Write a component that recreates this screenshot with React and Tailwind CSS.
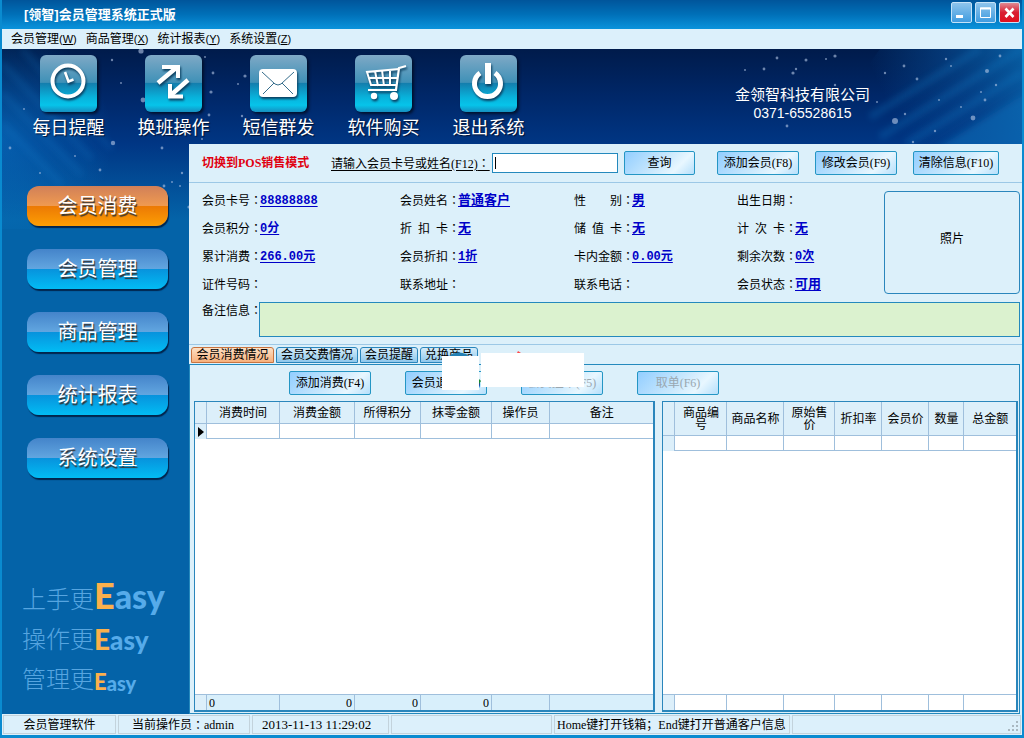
import clsx from 'clsx';

const MENUS = [
  { label: '会员管理', hotkey: 'W' },
  { label: '商品管理', hotkey: 'X' },
  { label: '统计报表', hotkey: 'Y' },
  { label: '系统设置', hotkey: 'Z' },
];

const SIDE_ITEMS = ['会员消费', '会员管理', '商品管理', '统计报表', '系统设置'];

const MEMBER_FIELDS = [
  { label: '会员卡号', value: '88888888' },
  { label: '会员姓名', value: '普通客户', wide: true },
  { label: '性　　别', value: '男', wide: true },
  { label: '出生日期' },
  { label: '会员积分', value: '0分' },
  { label: '折 扣 卡', value: '无', wide: true },
  { label: '储 值 卡', value: '无', wide: true },
  { label: '计 次 卡', value: '无', wide: true },
  { label: '累计消费', value: '266.00元' },
  { label: '会员折扣', value: '1折' },
  { label: '卡内金额', value: '0.00元' },
  { label: '剩余次数', value: '0次' },
  { label: '证件号码' },
  { label: '联系地址' },
  { label: '联系电话' },
  { label: '会员状态', value: '可用', wide: true },
];

const TABS = [
  { label: '会员消费情况', width: 'w-[83px]' },
  { label: '会员交费情况', width: 'w-[82px]' },
  { label: '会员提醒', width: 'w-[58px]' },
  { label: '兑换商品', width: 'w-[58px]' },
];

const SPEND_COLUMNS = [
  { label: '消费时间', width: 'w-[73px]', total: '0', align: 'text-left' },
  { label: '消费金额', width: 'w-[75px]', total: '0', align: 'text-right' },
  { label: '所得积分', width: 'w-[66px]', total: '0', align: 'text-right' },
  { label: '抹零金额', width: 'w-[71px]', total: '0', align: 'text-right' },
  { label: '操作员', width: 'w-[58px]' },
  { label: '备注', width: 'w-auto' },
];

const GOODS_COLUMNS = [
  { label: '商品编号', width: 'w-[52px]' },
  { label: '商品名称', width: 'w-[57px]' },
  { label: '原始售价', width: 'w-[51px]' },
  { label: '折扣率', width: 'w-[47px]' },
  { label: '会员价', width: 'w-[47px]' },
  { label: '数量', width: 'w-[35px]' },
  { label: '总金额', width: 'w-auto' },
];

const LEFT_STARS = [
  [141, 51, 2.4], [110, 11, 1.2], [167, 17, 1], [119, 34, 1], [203, 8, 1], [211, 24, 1.4], [209, 43, 1.6], [243, 27, 1.6],
  [236, 35, 1], [207, 66, 1.4], [240, 67, 1.2], [139, 2, 2.6], [200, 90, 1], [111, 94, 2.2], [8, 99, 1.4], [73, 107, 1],
  [98, 121, 1.4], [38, 124, 1], [178, 137, 1], [162, 137, 1.4], [170, 133, 1], [180, 124, 1.2], [187, 158, 1.6], [160, 99, 1.4], [22, 60, 1],
];

const RIGHT_STARS = [
  [97, 9, 1.4], [126, 11, 1.5], [146, 10, 1], [155, 7, 1.6], [84, 20, 1.4], [65, 21, 1], [116, 20, 1.2], [113, 24, 1.6],
  [155, 36, 1.2], [205, 24, 1.2], [224, 17, 1.4], [237, 30, 1.4], [266, 10, 1.2], [271, 17, 1], [307, 22, 2], [316, 36, 1.2],
  [320, 7, 1.4], [301, 43, 1], [305, 51, 1.4], [259, 51, 1], [281, 58, 1], [197, 53, 1], [215, 72, 3], [225, 65, 1.2],
  [293, 69, 2.4], [255, 82, 1.2], [107, 77, 1.4], [233, 93, 1.2],
];

function Sky() {
  return (
    <div aria-hidden="true" className="absolute inset-0 flex items-start justify-between overflow-hidden bg-[linear-gradient(#001b4b_0px,#00286a_50px,#003684_95px,#0463a8_170px,#0463a8_100%)]">
      <svg width="280" height="180" className="shrink-0">
        <defs>
          <radialGradient id="glowLeft" cx="0" cy="90" r="110" gradientUnits="userSpaceOnUse">
            <stop offset="0" stopColor="#0a7fd0" stopOpacity="0.55" />
            <stop offset="1" stopColor="#0a7fd0" stopOpacity="0" />
          </radialGradient>
          <filter id="soft" x="-20%" y="-20%" width="140%" height="140%">
            <feGaussianBlur stdDeviation="3" />
          </filter>
          <filter id="haze" x="-1" y="-1" width="3" height="3">
            <feGaussianBlur stdDeviation="0.6" />
          </filter>
        </defs>
        <rect width="120" height="180" fill="url(#glowLeft)" />
        <path d="M0 14L90 110M0 44L80 126M0 74L60 136M20 0L110 100" stroke="#1d8fdc" strokeWidth="6" opacity="0.16" filter="url(#soft)" />
        {LEFT_STARS.map(([x, y, r]) => (
          <circle key={`${x}-${y}`} cx={x} cy={y} r={r} fill="#b4c6e6" opacity="0.6" filter="url(#haze)" />
        ))}
      </svg>
      <svg width="342" height="95" className="shrink-0">
        <defs>
          <linearGradient id="glowRight" x1="342" y1="0" x2="210" y2="60" gradientUnits="userSpaceOnUse">
            <stop offset="0" stopColor="#0b72bd" />
            <stop offset="0.5" stopColor="#0a5aa8" stopOpacity="0.6" />
            <stop offset="1" stopColor="#0a5aa8" stopOpacity="0" />
          </linearGradient>
        </defs>
        <path d="M200 0H342V95H130Z" fill="url(#glowRight)" opacity="0.75" />
        <path d="M300 0L190 68M342 0L200 88M342 24L226 95" stroke="#1583cc" strokeWidth="7" opacity="0.25" filter="url(#soft)" />
        <path d="M350 42L256 100H350Z" fill="#0d70ba" opacity="0.5" filter="url(#soft)" />
        {RIGHT_STARS.map(([x, y, r]) => (
          <circle key={`${x}-${y}`} cx={x} cy={y} r={r} fill="#b6c8e6" opacity="0.6" filter="url(#haze)" />
        ))}
      </svg>
    </div>
  );
}

function ClockIcon() {
  return (
    <g fill="none" stroke="#fff">
      <circle cx="28" cy="26" r="15.5" strokeWidth="4" />
      <path d="M25 17L28.5 26.5L33.5 24.5" strokeWidth="2.6" />
    </g>
  );
}

function SwapIcon() {
  return (
    <g fill="none" stroke="#fff" strokeWidth="4.5">
      <path d="M13 28L31 13" />
      <path d="M17 12H33V23" strokeWidth="4" />
      <path d="M43 25L26 40" />
      <path d="M25 29V41.5H38" strokeWidth="4" />
    </g>
  );
}

function MailIcon() {
  return (
    <g>
      <rect x="9" y="14" width="38" height="28" rx="4" fill="#fff" />
      <path d="M12 17L25 29Q28 31 31 29L44 17M13 39L24 28M43 39L32 28" fill="none" stroke="#356d8c" strokeWidth="1" />
    </g>
  );
}

function CartIcon() {
  return (
    <g fill="none" stroke="#fff">
      <path d="M51 11L44 13L41 35H13" strokeWidth="2.2" />
      <path d="M44 14L12 17L16 30L41 30M13 23L42 23M20 16L23 31M27 15L29 31M35 14L35 31" strokeWidth="2" />
      <circle cx="19" cy="41" r="3.2" fill="#fff" stroke="none" />
      <circle cx="39" cy="41" r="4" fill="#fff" stroke="none" />
    </g>
  );
}

function PowerIcon() {
  return (
    <g fill="none" stroke="#fff">
      <path d="M20 18A13 13 0 1 0 35 18" strokeWidth="5" />
      <path d="M28 8V29" strokeWidth="6" strokeLinecap="butt" />
    </g>
  );
}

const TOOLS = [
  { label: '每日提醒', Icon: ClockIcon },
  { label: '换班操作', Icon: SwapIcon },
  { label: '短信群发', Icon: MailIcon },
  { label: '软件购买', Icon: CartIcon },
  { label: '退出系统', Icon: PowerIcon },
];

function ToolButton({ label, Icon }) {
  return (
    <button type="button" className="flex w-[105px] flex-col items-center text-white">
      <span className="block size-[57px] rounded-md bg-[linear-gradient(#7fa9c6_0%,#3f91b7_48%,#137fae_50%,#08b3dc_75%,#06c4ea_88%,#168fc0_100%)] shadow-[2px_2px_3px_#00112e]">
        <svg width="57" height="57" viewBox="0 0 57 57" className="drop-shadow-[1px_2px_1px_#0b3f60]">
          <Icon />
        </svg>
      </span>
      <span className="mt-[5px] text-lg leading-[22px] [text-shadow:1px_1px_1px_#001030]">{label}</span>
    </button>
  );
}

function TitleBar() {
  const box = 'flex size-[21px] items-center justify-center rounded-[2px] border border-[#c4e2f8]';
  return (
    <header className="flex h-[29px] items-start justify-between bg-[linear-gradient(#00559b,#0070b8_50%,#0a93dc)] pr-[2px] pl-[22px]">
      <h1 className="font-['Liberation_Sans','Noto_Sans_CJK_SC',sans-serif] text-[13px] leading-[29px] font-bold text-white">[领智]会员管理系统正式版</h1>
      <div className="flex gap-[3px] pt-[2px]">
        <button type="button" aria-label="最小化" className={clsx(box, 'bg-[linear-gradient(#8ec4ec,#3f9ce0)]')}>
          <svg width="19" height="19"><rect x="4" y="12" width="7" height="3" fill="#fff" /></svg>
        </button>
        <button type="button" aria-label="最大化" className={clsx(box, 'bg-[linear-gradient(#8ec4ec,#3f9ce0)]')}>
          <svg width="19" height="19"><path d="M4.5 5H14.5V14.5H4.5Z" fill="none" stroke="#fff" /><path d="M4 5.5H15" stroke="#fff" strokeWidth="2" /></svg>
        </button>
        <button type="button" aria-label="关闭" className={clsx(box, 'bg-[linear-gradient(#e08a92,#d81f33_50%,#e0101f)]')}>
          <svg width="19" height="19"><path d="M5.5 5.5L13.5 14M13.5 5.5L5.5 14" stroke="#fff" strokeWidth="2.6" /></svg>
        </button>
      </div>
    </header>
  );
}

function MenuBar() {
  return (
    <nav className="flex h-5 items-center gap-[9px] bg-[#dcf0fb] pl-[9px] font-['Liberation_Sans','Noto_Sans_CJK_SC',sans-serif]">
      {MENUS.map((m) => (
        <button key={m.label} type="button" className="leading-5">
          {m.label}<span className="text-[11px]">(<u>{m.hotkey}</u>)</span>
        </button>
      ))}
    </nav>
  );
}

function Slogan({ text, size, lead }) {
  return (
    <p className="flex h-10 items-end font-['Lato','Noto_Sans_CJK_SC',sans-serif] leading-none">
      <span className="pb-[2px] text-2xl leading-none font-light text-[#56a5e0]">{text}</span>
      <span className={clsx('font-black text-[#fbb04c]', lead)}>E</span>
      <span className={clsx('font-black text-[#56abea]', size)}>asy</span>
    </p>
  );
}

function Sidebar() {
  return (
    <aside className="flex w-[187px] shrink-0 flex-col justify-between pt-[42px] pb-[21px]">
      <nav className="flex flex-col gap-[23px] pl-[25px]">
        {SIDE_ITEMS.map((label, i) => (
          <button
            key={label}
            type="button"
            className={clsx(
              'h-10 w-[141px] rounded-xl text-xl leading-10 text-white shadow-[1px_2px_1px_#02254d] [text-shadow:1px_2px_1px_#333]',
              i === 0
                ? 'bg-[linear-gradient(#d08058_0%,#f09a50_50%,#ec7a04_51%,#fd9e04_100%)]'
                : 'bg-[linear-gradient(#4484ca_0%,#62a6e0_50%,#0793dd_51%,#02bcf4_100%)]',
            )}
          >
            {label}
          </button>
        ))}
      </nav>
      <div className="pl-5">
        <Slogan text="上手更" lead="text-[36px]" size="text-[34px]" />
        <Slogan text="操作更" lead="text-[28px]" size="text-[26px]" />
        <Slogan text="管理更" lead="text-[22px]" size="text-[20px]" />
      </div>
    </aside>
  );
}

function PushButton({ children, className, disabled }) {
  return (
    <button
      type="button"
      disabled={disabled}
      className={clsx(
        'h-6 shrink-0 rounded-[2px] border border-[#2496c4] bg-[linear-gradient(135deg,#92ceff_0%,#c9e8fd_50%,#e8f7ff_75%,#b5dffb_100%)] whitespace-nowrap leading-[20px] disabled:text-[#9aa7b0]',
        className,
      )}
    >
      {children}
    </button>
  );
}

function Colon() {
  return <span className="font-['Noto_Sans_CJK_TC',sans-serif]">：</span>;
}

function SearchRow() {
  return (
    <form className="flex h-[39px] items-center border-b border-[#9cc8e6] pl-[13px]">
      <a href="#pos" className="w-[129px] font-bold whitespace-nowrap text-[#e00010]">切换到POS销售模式</a>
      <label htmlFor="card" className="w-[161px] whitespace-nowrap underline underline-offset-2">请输入会员卡号或姓名(F12)<Colon /></label>
      <div className="relative">
        <input id="card" type="text" className="block h-5 w-[126px] rounded-none border border-[#2489bd] bg-white px-[2px] outline-none" />
        {/* text caret */}
        <span className="absolute top-1 left-[3px] h-3 w-px bg-black" />
      </div>
      <PushButton className="ml-[6px] w-[71px]">查询</PushButton>
      <div className="ml-[22px] flex gap-4">
        <PushButton className="w-[82px]">添加会员(F8)</PushButton>
        <PushButton className="w-[82px]">修改会员(F9)</PushButton>
        <PushButton className="w-[86px]">清除信息(F10)</PushButton>
      </div>
    </form>
  );
}

function MemberInfo() {
  return (
    <section className="border-b border-[#9cc8e6] pt-[3px] pr-[2px] pb-[7px] pl-[13px]">
      <div className="flex items-start justify-between">
        <dl className="grid flex-1 grid-cols-[198px_174px_163px_1fr] leading-7">
          {MEMBER_FIELDS.map((f) => (
            <div key={f.label} className="flex h-7 whitespace-pre">
              <dt className="w-[58px] whitespace-pre">
                <span className="inline-flex w-12 justify-between">
                  {f.label.split(/[ 　]+/).map((part) => <span key={part}>{part}</span>)}
                </span>
                <Colon />
              </dt>
              {f.value && (
                <dd>
                  <a
                    href="#member"
                    className={clsx(
                      "font-['Liberation_Mono','Noto_Sans_CJK_SC',monospace] font-bold text-[#0000c8] underline underline-offset-2",
                      f.wide && 'text-[13px]',
                    )}
                  >
                    {f.value}
                  </a>
                </dd>
              )}
            </div>
          ))}
        </dl>
        <div className="mt-[5px] flex h-[103px] w-[136px] shrink-0 items-center justify-center rounded-[4px] border border-[#2a86bc] pb-2">照片</div>
      </div>
      <div className="mt-1 flex">
        <label htmlFor="memo" className="w-[57px] shrink-0 whitespace-nowrap leading-4">备注信息<Colon /></label>
        <textarea id="memo" className="h-[35px] flex-1 resize-none border border-[#2489bd] bg-[#dbf2cf] outline-none" />
      </div>
    </section>
  );
}

function ColumnWidths({ columns }) {
  return (
    <colgroup>
      <col className="w-3" />
      {columns.map((c) => <col key={c.label} className={c.width} />)}
    </colgroup>
  );
}

function DataGrid({ name, columns, headHeight, marker, footTint }) {
  const line = 'border-r border-[#9fbfdc] last:border-r-0';
  return (
    <div className="flex flex-col border border-r-2 border-b-2 border-[#2a86bc] bg-white">
      <table aria-label={name} className="w-full table-fixed border-separate border-spacing-0">
        <ColumnWidths columns={columns} />
        <thead>
          <tr className={clsx('bg-[#dceffa]', headHeight)}>
            <td className={clsx('border-b', line)} />
            {columns.map((c) => (
              <th key={c.label} scope="col" className={clsx('border-b px-[3px] leading-3 font-normal', line)}>{c.label}</th>
            ))}
          </tr>
        </thead>
        <tbody>
          <tr className="h-[15px]">
            <td className={clsx('bg-[#dceffa]', line)}>
              {marker && <svg width="9" height="12" className="block pl-[3px]"><path d="M0 1L6 6L0 11Z" fill="#000" /></svg>}
            </td>
            {columns.map((c) => <td key={c.label} className={clsx('border-b', line)} />)}
          </tr>
        </tbody>
      </table>
      <div className="flex-1" />
      <table aria-label={`${name}合计`} className="w-full table-fixed border-separate border-spacing-0">
        <ColumnWidths columns={columns} />
        <tbody>
          <tr className={clsx('h-4', footTint && 'bg-[#d8effb]')}>
            <td className={clsx('border-t bg-[#dceffa]', line)} />
            {columns.map((c) => (
              <td key={c.label} className={clsx('border-t px-[2px] leading-[14px]', line, c.align)}>{c.total}</td>
            ))}
          </tr>
        </tbody>
      </table>
    </div>
  );
}

function RecordPanel() {
  return (
    <section className="relative flex flex-1 flex-col pt-[2px] pr-[2px]">
      <div role="tablist" className="flex gap-[2px] pl-[2px]">
        {TABS.map((t, i) => (
          <button
            key={t.label}
            type="button"
            role="tab"
            aria-selected={i === 0}
            className={clsx(
              'h-4 rounded-t-[3px] border whitespace-nowrap leading-[15px]',
              t.width,
              i === 0 ? 'border-[#c9743f] bg-[linear-gradient(#fde0c4,#f7b07c)]' : 'border-[#2a86bc] bg-[linear-gradient(#d4ecfa,#8fc8ec)]',
            )}
          >
            {t.label}
          </button>
        ))}
      </div>
      <div className="mt-px flex flex-1 flex-col border border-[#2489bd] pt-[6px] pr-px pl-1">
        <div className="flex gap-[34px] pl-[95px]">
          <PushButton className="w-[82px]">添加消费(F4)</PushButton>
          <PushButton className="w-[82px]">会员退货(F7)</PushButton>
          <PushButton className="w-[82px]" disabled>会员挂单(F5)</PushButton>
          <PushButton className="w-[82px]" disabled>取单(F6)</PushButton>
        </div>
        <div className="mt-[6px] grid flex-1 grid-cols-[462fr_356fr] gap-[7px] pb-px">
          <DataGrid name="消费记录" columns={SPEND_COLUMNS} headHeight="h-[22px]" marker footTint />
          <DataGrid name="商品明细" columns={GOODS_COLUMNS} headHeight="h-[34px]" />
        </div>
      </div>
      {/* blank patches lying over the tabs and the toolbar */}
      <div className="absolute top-[11px] left-[253px] h-[34px] w-[37px] bg-white" />
      <div className="absolute top-[8px] left-[292px] h-[34px] w-[103px] bg-white" />
      <svg width="140" height="40" className="pointer-events-none absolute top-[5px] left-[253px]">
        <path d="M7 6Q15 0 24 4L26 6Z" fill="#2380b4" />
        <path d="M76 1L79 3H75Z" fill="#ff4a4a" />
        <path d="M37 29L39 31L37 34Z" fill="#178a2e" />
      </svg>
    </section>
  );
}

function StatusBar() {
  const cell = 'flex items-center border border-[#c3d3dc] whitespace-nowrap';
  return (
    <footer className="flex h-[21px] gap-[2px] bg-[#dcf0fb] p-px">
      <div className={clsx(cell, 'w-[113px] justify-center')}>会员管理软件</div>
      <div className={clsx(cell, 'w-[132px] pl-[13px]')}>当前操作员<Colon />admin</div>
      <div className={clsx(cell, 'w-[137px] pl-[9px] text-[13px]')}>2013-11-13 11:29:02</div>
      <div className={clsx(cell, 'w-[161px]')} />
      <div className={clsx(cell, 'w-[236px] pl-[2px]')}>Home键打开钱箱；End键打开普通客户信息</div>
      <div className={clsx(cell, 'flex-1 items-end justify-end')}>
        <svg width="12" height="12" fill="#a9b8c1">
          <path d="M8 0h2v2h-2zM4 4h2v2h-2zM8 4h2v2h-2zM0 8h2v2h-2zM4 8h2v2h-2zM8 8h2v2h-2z" />
        </svg>
      </div>
    </footer>
  );
}

export default function App() {
  return (
    <div className="flex min-h-screen flex-col border-x-2 border-b-[3px] border-[#0a8bd0] font-['Liberation_Serif','Noto_Sans_CJK_SC',serif] text-xs text-black">
      <TitleBar />
      <MenuBar />
      <div className="relative flex flex-1 flex-col">
        <Sky />
        <div className="relative flex h-[95px] justify-between pt-[6px] pr-[152px] pl-[14px]">
          <div className="flex h-[84px]">
            {TOOLS.map((t) => <ToolButton key={t.label} {...t} />)}
          </div>
          <div className="pt-[31px] text-center font-['Liberation_Sans','Noto_Sans_CJK_SC',sans-serif] text-[15px] leading-[18px] text-white">
            <p>金领智科技有限公司</p>
            <p className="text-sm leading-[18px]">0371-65528615</p>
          </div>
        </div>
        <div className="relative flex flex-1">
          <Sidebar />
          <main className="flex min-w-0 flex-1 flex-col bg-[#dcf0fa]">
            <SearchRow />
            <MemberInfo />
            <RecordPanel />
          </main>
        </div>
      </div>
      <StatusBar />
    </div>
  );
}
